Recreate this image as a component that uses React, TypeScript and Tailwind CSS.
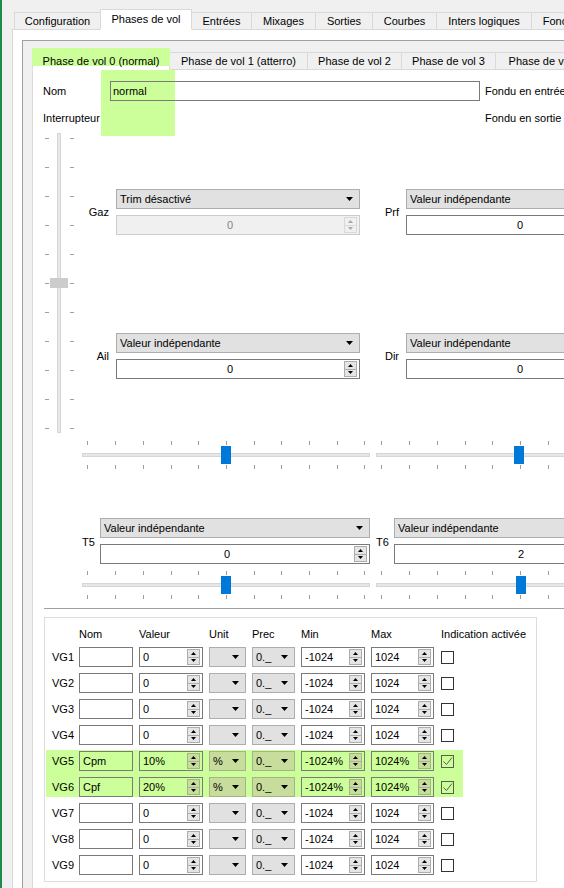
import React from 'react';

const GREEN = 'bg-[#ccff99]';

const Down = ({ color = '#000' }: { color?: string }) => (
  <svg width="7" height="4" viewBox="0 0 7 4" className="shrink-0">
    <path d="M0 0h7L3.5 4z" fill={color} />
  </svg>
);

const SpinArrows = ({ disabled, tint }: { disabled?: boolean; tint?: boolean }) => {
  const c = disabled ? '#a8a8a8' : '#000';
  const box = disabled ? 'border-[#d9d9d9] bg-[#f0f0f0]' : tint ? 'border-[#a3b38a] bg-[#c8dc9c]' : 'border-[#adadad] bg-[#e5e5e5]';
  return (
    <div className={`absolute right-[2px] top-[1px] bottom-[1px] w-[13px] border flex flex-col ${box}`}>
      <div className={`flex-1 flex items-center justify-center border-b ${disabled ? 'border-[#d9d9d9]' : 'border-[#adadad]'}`}>
        <svg width="5" height="3" viewBox="0 0 5 3"><path d="M0 3h5L2.5 0z" fill={c} /></svg>
      </div>
      <div className="flex-1 flex items-center justify-center">
        <svg width="5" height="3" viewBox="0 0 5 3"><path d="M0 0h5L2.5 3z" fill={c} /></svg>
      </div>
    </div>
  );
};

const Combo = ({ text, className = '', tint }: { text: string; className?: string; tint?: boolean }) => (
  <div className={`h-[20px] shrink-0 border flex items-center pl-[3px] pr-[6px] ${tint ? 'border-[#a3b38a] bg-[#c8dc9c]' : 'border-[#adadad] bg-[#e1e1e1]'} ${className}`}>
    <span className="flex-1 whitespace-nowrap overflow-hidden">{text}</span>
    <Down />
  </div>
);

const Spin = ({ value, center, disabled, tint, className = '' }: { value: string; center?: boolean; disabled?: boolean; tint?: boolean; className?: string }) => (
  <div
    className={`relative h-[20px] shrink-0 border flex items-center whitespace-nowrap ${
      disabled ? 'border-[#cccccc] bg-[#f0f0f0] text-[#838383]' : `border-[#7a7a7a] ${tint ? 'bg-transparent' : 'bg-white'}`
    } ${center ? 'justify-center pr-[16px]' : 'pl-[3px]'} ${className}`}
  >
    {value}
    <SpinArrows disabled={disabled} tint={tint} />
  </div>
);

const VSlider = () => (
  <svg width="29" height="300" className="shrink-0 ml-[12px]" shapeRendering="crispEdges">
    {Array.from({ length: 11 }, (_, i) => (
      <g key={i}>
        <rect x="0" y={5 + 29 * i} width="4" height="1" fill="#a0a0a0" />
        <rect x="25" y={5 + 29 * i} width="4" height="1" fill="#a0a0a0" />
      </g>
    ))}
    <rect x="12" y="0" width="4" height="300" fill="#d6d6d6" />
    <rect x="13" y="1" width="2" height="298" fill="#e7e7e7" />
    <rect x="5" y="145" width="18" height="10" fill="#cccccc" />
  </svg>
);

const HSlider = ({ pos = 144 }: { pos?: number }) => (
  <svg width="288" height="29" className="shrink-0" shapeRendering="crispEdges">
    {Array.from({ length: 11 }, (_, i) => {
      const x = Math.round(5.4 + 27.7 * i);
      return (
        <g key={i}>
          <rect x={x} y="0" width="1" height="4" fill="#a09c94" />
          <rect x={x} y="24" width="1" height="4" fill="#a09c94" />
        </g>
      );
    })}
    <rect x="0" y="12" width="288" height="4" fill="#d6d6d6" />
    <rect x="1" y="13" width="286" height="2" fill="#e7e7e7" />
    <rect x={pos - 5} y="5" width="10" height="18" fill="#0078d7" />
  </svg>
);

const Trim = ({ label, labelW, combo, value, disabled, className = '' }: { label: string; labelW: string; combo: string; value: string; disabled?: boolean; className?: string }) => (
  <div className={`flex items-center shrink-0 ${className}`}>
    <div className={`${labelW} shrink-0 text-right pr-[7px]`}>{label}</div>
    <div className="w-[244px] shrink-0 flex flex-col">
      <Combo text={combo} />
      <Spin value={value} center disabled={disabled} className="mt-[6px]" />
    </div>
  </div>
);

const TCell = ({ label, value, className = '' }: { label: string; value: string; className?: string }) => (
  <div className={`flex items-center shrink-0 ${className}`}>
    <div className="w-[18px] shrink-0 pt-[2px]">{label}</div>
    <div className="w-[270px] shrink-0 flex flex-col">
      <Combo text="Valeur indépendante" />
      <Spin value={value} center className="mt-[6px]" />
    </div>
  </div>
);

const Check = ({ checked }: { checked?: boolean }) => (
  <div className={`ml-[1px] w-[13px] h-[13px] shrink-0 border flex items-center justify-center ${checked ? 'border-[#56604c]' : 'border-[#333333] bg-white'}`}>
    {checked && (
      <svg width="11" height="11" viewBox="0 0 11 11">
        <path d="M1.5 5.5l3 3 5.5-7" fill="none" stroke="#56604c" strokeWidth="1" />
      </svg>
    )}
  </div>
);

type GVar = { id: string; name: string; val: string; unit: string; min: string; max: string; on: boolean };

const vars: GVar[] = Array.from({ length: 9 }, (_, i) => {
  const id = `VG${i + 1}`;
  if (i === 4) return { id, name: 'Cpm', val: '10%', unit: '%', min: '-1024%', max: '1024%', on: true };
  if (i === 5) return { id, name: 'Cpf', val: '20%', unit: '%', min: '-1024%', max: '1024%', on: true };
  return { id, name: '', val: '0', unit: '', min: '-1024', max: '1024', on: false };
});

const VarRow = ({ v }: { v: GVar }) => {
  const t = v.on;
  return (
    <div className="flex items-center h-[20px] gap-[6px]">
      <div className="w-[21px] shrink-0">{v.id}</div>
      <div className={`w-[54px] h-[20px] shrink-0 border border-[#7a7a7a] flex items-center pl-[3px] ${t ? 'bg-transparent' : 'bg-white'}`}>{v.name}</div>
      <Spin value={v.val} tint={t} className="w-[64px]" />
      <Combo text={v.unit} tint={t} className="w-[37px]" />
      <Combo text="0._" tint={t} className="w-[43px]" />
      <Spin value={v.min} tint={t} className="w-[64px]" />
      <Spin value={v.max} tint={t} className="w-[63px]" />
      <Check checked={v.on} />
    </div>
  );
};

const outerTabs: [string, number][] = [
  ['Configuration', 87],
  ['Phases de vol', 92],
  ['Entrées', 61],
  ['Mixages', 65],
  ['Sorties', 58],
  ['Courbes', 65],
  ['Inters logiques', 96],
  ['Fonctions spéciales', 120],
];

const innerTabs: [string, number][] = [
  ['Phase de vol 0 (normal)', 138],
  ['Phase de vol 1 (atterro)', 139],
  ['Phase de vol 2', 95],
  ['Phase de vol 3', 95],
  ['Phase de vol 4', 100],
];

export default function App() {
  return (
    <div className="w-[564px] h-[888px] overflow-hidden bg-[#f0f0f0] flex font-['Liberation_Sans',Arial,sans-serif] text-[11px] text-black leading-none">
      <div className="w-[2px] shrink-0 bg-[#1e8a4c]" />
      <div className="pl-[10px] pt-[9px] flex-1 min-w-0 flex flex-col">
        {/* top tab bar */}
        <div className="flex items-end h-[21px] pl-[2px] -mb-px relative z-10">
          {outerTabs.map(([label, w], i) => {
            const active = i === 1;
            return (
              <div
                key={label}
                style={{ width: w }}
                className={`shrink-0 flex items-center justify-center whitespace-nowrap overflow-hidden border border-[#d9d9d9] ${i > 0 ? '-ml-px' : ''} ${
                  active ? 'h-[21px] bg-white border-b-white relative z-10' : 'h-[18px] bg-[#f0f0f0]'
                }`}
              >
                {label}
              </div>
            );
          })}
        </div>

        <div className="flex-1 flex flex-col border-l border-t border-[#d9d9d9] bg-white pl-[9px] pt-[10px]">
          <div className="flex-1 flex flex-col border-l border-t border-[#a0a0a0] bg-[#f0f0f0] pl-[9px] pt-[7px]">
            {/* flight mode tabs */}
            <div className="flex items-end h-[22px] -mb-px relative z-10">
              {innerTabs.map(([label, w], i) => {
                const active = i === 0;
                return (
                  <div
                    key={label}
                    style={{ width: w }}
                    className={`shrink-0 relative flex items-center justify-center whitespace-nowrap border border-[#d9d9d9] ${i > 0 ? '-ml-px' : ''} ${
                      active ? 'h-[22px] bg-white border-b-white z-10 pt-[4px]' : 'h-[18px] bg-[#f0f0f0] overflow-hidden'
                    }`}
                  >
                    {active && <span className={`absolute -left-px -top-px -right-px bottom-[3px] ${GREEN}`} />}
                    <span className="relative">{label}</span>
                  </div>
                );
              })}
            </div>

            <div className="flex-1 relative border-l border-t border-[#d9d9d9] bg-white pt-[11px]">
              <div className={`absolute left-[68px] top-0 w-[74px] h-[66px] ${GREEN}`} />

              <div className="relative flex items-center h-[20px]">
                <div className="w-[77px] shrink-0 pl-[10px]">Nom</div>
                <div className="w-[370px] h-[20px] shrink-0 border border-[#7a7a7a] flex items-center pl-[2px]">normal</div>
                <div className="ml-[5px] shrink-0 whitespace-nowrap">Fondu en entrée</div>
              </div>
              <div className="relative flex items-center h-[20px] mt-[7px]">
                <div className="w-[452px] shrink-0 pl-[10px]">Interrupteur</div>
                <div className="shrink-0 whitespace-nowrap">Fondu en sortie</div>
              </div>

              <div className="flex mt-[5px] h-[300px]">
                <VSlider />
                <div className="ml-[8px] flex flex-col shrink-0">
                  <div className="flex mt-[56px]">
                    <Trim label="Gaz" labelW="w-[34px]" combo="Trim désactivé" value="0" disabled />
                    <Trim label="Prf" labelW="w-[30px]" combo="Valeur indépendante" value="0" className="ml-[16px]" />
                  </div>
                  <div className="flex mt-[98px]">
                    <Trim label="Ail" labelW="w-[34px]" combo="Valeur indépendante" value="0" />
                    <Trim label="Dir" labelW="w-[30px]" combo="Valeur indépendante" value="0" className="ml-[16px]" />
                  </div>
                </div>
              </div>

              <div className="flex mt-[8px] ml-[49px] gap-[6px]">
                <HSlider />
                <HSlider pos={143} />
              </div>

              <div className="flex mt-[48px] ml-[49px]">
                <TCell label="T5" value="0" />
                <TCell label="T6" value="2" className="ml-[6px]" />
              </div>

              <div className="flex mt-[7px] ml-[49px] gap-[6px]">
                <HSlider />
                <HSlider pos={145} />
              </div>

              <div className="mt-[8px] ml-[11px] border-t border-[#a0a0a0]" />

              <div className="mt-[8px] ml-[11px] w-[493px] border border-[#dcdcdc] pt-[8px] pb-[6px] pl-[7px]">
                <div className="flex items-center h-[16px] gap-[6px] whitespace-nowrap">
                  <div className="w-[21px] shrink-0" />
                  <div className="w-[54px] shrink-0">Nom</div>
                  <div className="w-[64px] shrink-0">Valeur</div>
                  <div className="w-[37px] shrink-0">Unit</div>
                  <div className="w-[43px] shrink-0">Prec</div>
                  <div className="w-[64px] shrink-0">Min</div>
                  <div className="w-[63px] shrink-0">Max</div>
                  <div className="ml-[1px] shrink-0">Indication activée</div>
                </div>
                <div className="mt-[5px] flex flex-col gap-[6px]">
                  {vars.slice(0, 4).map((v) => (
                    <VarRow key={v.id} v={v} />
                  ))}
                  <div className={`-mt-[1px] pt-[1px] -ml-[6px] pl-[6px] w-[417px] flex flex-col gap-[6px] ${GREEN}`}>
                    {vars.slice(4, 6).map((v) => (
                      <VarRow key={v.id} v={v} />
                    ))}
                  </div>
                  {vars.slice(6).map((v) => (
                    <VarRow key={v.id} v={v} />
                  ))}
                </div>
              </div>
            </div>
          </div>
        </div>
      </div>
    </div>
  );
}
